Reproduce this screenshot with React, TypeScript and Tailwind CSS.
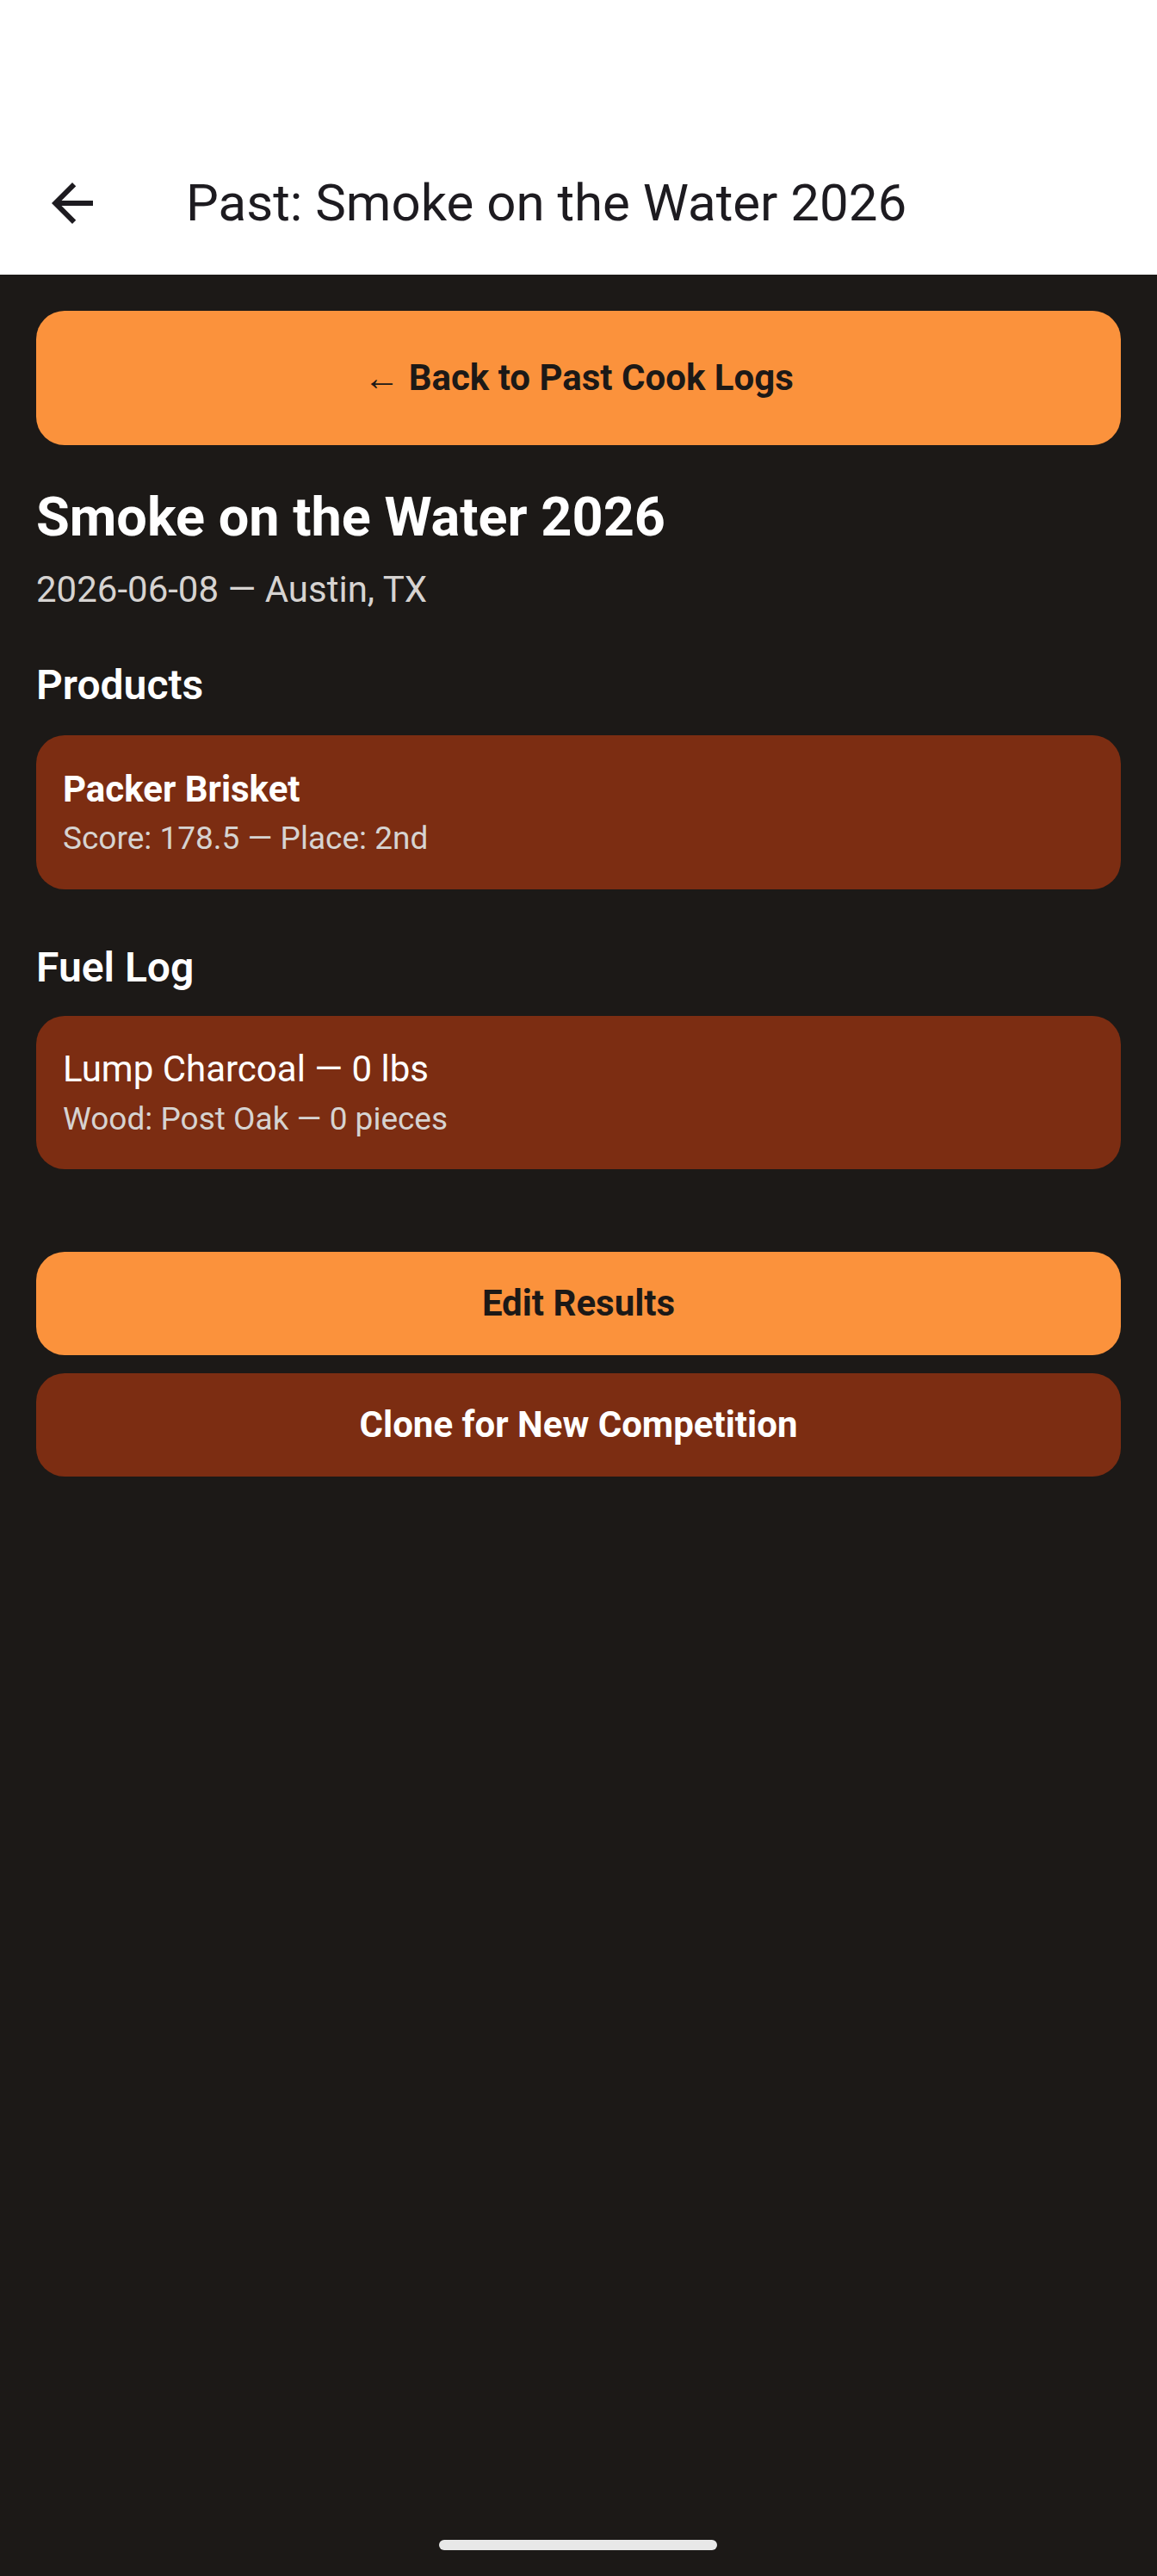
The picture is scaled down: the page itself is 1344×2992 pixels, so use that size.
import React from "react";

export default function App() {
  const font = { fontFamily: "Roboto, 'Noto Sans', sans-serif" };
  return (
    <div className="relative min-h-[2992px] w-[1344px] bg-[#1c1917]" style={font}>
      {/* Top bar */}
      <div className="h-[319px] bg-white flex items-end">
        <div className="flex items-center h-[166px] w-full">
          <div className="ml-[48px] w-[72px] h-[72px] flex items-center justify-center">
            <svg viewBox="0 0 24 24" width="72" height="72" fill="#1d1b20">
              <path d="M20 11H7.83l5.59-5.59L12 4l-8 8 8 8 1.41-1.41L7.83 13H20v-2z" />
            </svg>
          </div>
          <div className="ml-[96px] text-[60px] leading-[72px] text-[#1d1b20]">
            Past: Smoke on the Water 2026
          </div>
        </div>
      </div>

      <div className="px-[42px]">
        <button className="mt-[42px] w-full h-[156px] rounded-[33px] bg-[#fb923c] text-[#1c1917] text-[42px] font-bold leading-[50px]">
          ← Back to Past Cook Logs
        </button>

        <div className="mt-[46px] text-white text-[63px] leading-[76px] font-bold">
          Smoke on the Water 2026
        </div>
        <div className="mt-[21px] text-[#d6d3d1] text-[42px] leading-[50px]">
          2026-06-08 — Austin, TX
        </div>

        <div className="mt-[58px] text-white text-[48px] leading-[56px] font-semibold">
          Products
        </div>
        <div className="mt-[30px] rounded-[33px] bg-[#7c2d12] px-[31px] pt-[38px] pb-[37px]">
          <div className="text-white text-[42px] leading-[50px] font-bold">Packer Brisket</div>
          <div className="mt-[10px] text-[#d6d3d1] text-[37px] leading-[44px]">
            Score: 178.5 — Place: 2nd
          </div>
        </div>

        <div className="mt-[63px] text-white text-[48px] leading-[56px] font-semibold">
          Fuel Log
        </div>
        <div className="mt-[28px] rounded-[33px] bg-[#7c2d12] px-[31px] pt-[37px] pb-[36px]">
          <div className="text-white text-[42px] leading-[50px]">Lump Charcoal — 0 lbs</div>
          <div className="mt-[11px] text-[#d6d3d1] text-[37px] leading-[44px]">
            Wood: Post Oak — 0 pieces
          </div>
        </div>

        <button className="mt-[96px] w-full h-[120px] rounded-[33px] bg-[#fb923c] text-[#1c1917] text-[42px] font-bold leading-[50px]">
          Edit Results
        </button>
        <button className="mt-[21px] w-full h-[120px] rounded-[33px] bg-[#7c2d12] text-white text-[42px] font-bold leading-[50px]">
          Clone for New Competition
        </button>
      </div>

      <div className="absolute left-[510px] top-[2950px] w-[323px] h-[12px] rounded-full bg-[#e8e8e8]" />
    </div>
  );
}
